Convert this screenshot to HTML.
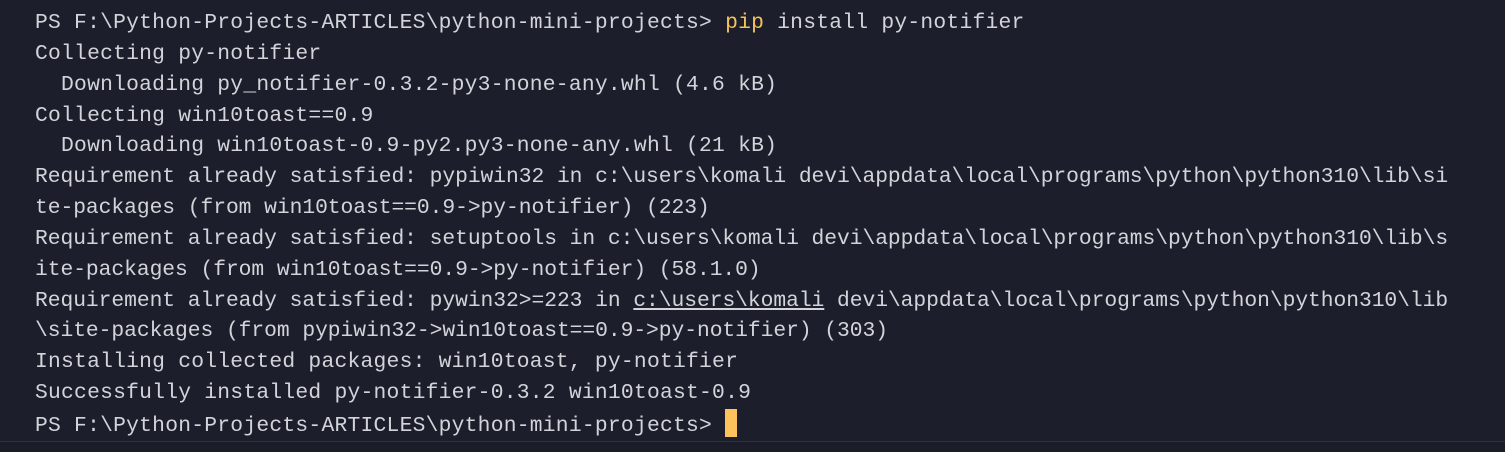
<!DOCTYPE html>
<html><head><style>
html,body{margin:0;padding:0;}
body{width:1505px;height:452px;background:#1c1f2b;overflow:hidden;position:relative;}
pre{position:absolute;left:35px;top:8px;margin:0;font-family:"Liberation Mono",monospace;font-size:21.3px;letter-spacing:0.24px;line-height:30.85px;color:#d2d4da;}
.l{letter-spacing:-0.05px;}
.y{color:#f6c15a;}
.u{text-decoration:underline;}
.cur{display:inline-block;width:12px;height:28px;background:#fcc35d;vertical-align:-6px;}
.sep{position:absolute;left:0;top:441px;width:1505px;height:1px;background:#2c3040;}
.bot{position:absolute;left:0;top:442px;width:1505px;height:10px;background:#1a1d28;}
</style></head><body>
<pre>PS F:\Python-Projects-ARTICLES\python-mini-projects&gt; <span class="y">pip</span> install py-notifier
Collecting py-notifier
  Downloading py_notifier-0.3.2-py3-none-any.whl (4.6 kB)
Collecting win10toast==0.9
  Downloading win10toast-0.9-py2.py3-none-any.whl (21 kB)
<span class="l">Requirement already satisfied: pypiwin32 in c:\users\komali devi\appdata\local\programs\python\python310\lib\si
te-packages (from win10toast==0.9-&gt;py-notifier) (223)
Requirement already satisfied: setuptools in c:\users\komali devi\appdata\local\programs\python\python310\lib\s
ite-packages (from win10toast==0.9-&gt;py-notifier) (58.1.0)
Requirement already satisfied: pywin32&gt;=223 in <span class="u">c:\users\komali</span> devi\appdata\local\programs\python\python310\lib
\site-packages (from pypiwin32-&gt;win10toast==0.9-&gt;py-notifier) (303)</span>
Installing collected packages: win10toast, py-notifier
Successfully installed py-notifier-0.3.2 win10toast-0.9
PS F:\Python-Projects-ARTICLES\python-mini-projects&gt; <span class="cur"></span></pre>
<div class="sep"></div><div class="bot"></div>
</body></html>
